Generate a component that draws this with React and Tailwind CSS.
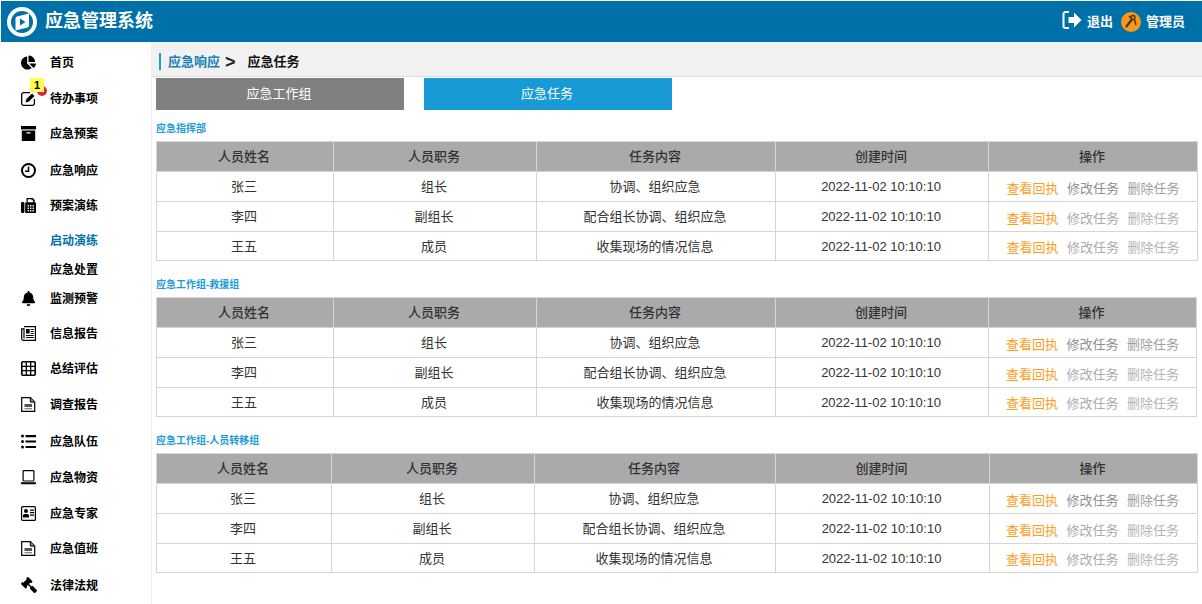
import React from "react";
import { FaChartPie, FaBell, FaGavel } from "react-icons/fa";

const Svg = ({ children }) => (
  <svg width="15" height="15" viewBox="0 0 15 15" className="block overflow-visible">
    {children}
  </svg>
);

const EditIcon = () => (
  <Svg>
    <path d="M9 1.6H2.5A1.8 1.8 0 0 0 .7 3.4v9.1a1.8 1.8 0 0 0 1.8 1.8h9.1a1.8 1.8 0 0 0 1.8-1.8V8" fill="none" stroke="#000" strokeWidth="1.3" />
    <path d="M4.5 11.5l.8-3.2L11 2.5l2.5 2.5-5.8 5.7z" fill="#000" />
  </Svg>
);
const ArchiveIcon = () => (
  <Svg>
    <path d="M0 0h15v3.4H0z" />
    <path fillRule="evenodd" d="M.8 4.4h13.4V15H.8zM5.5 6.2v1.3h4V6.2z" />
  </Svg>
);
const ClockIcon = () => (
  <Svg>
    <circle cx="7.5" cy="7.5" r="6.5" fill="none" stroke="#000" strokeWidth="2" />
    <path d="M7.5 3.5V8.3H4" fill="none" stroke="#000" strokeWidth="1.5" />
  </Svg>
);
const FaxIcon = () => (
  <Svg>
    <rect x="0" y="4" width="3.4" height="11" rx="1.2" />
    <path fillRule="evenodd" d="M4.2 4.5h1.3V0h6.3l1.9 2v2.5h1.3V15H4.2zM6.5 7v1.4h1.4V7zM9 7v1.4h1.4V7zM11.5 7v1.4h1.4V7zM6.5 9.5v1.4h1.4V9.5zM9 9.5v1.4h1.4V9.5zM11.5 9.5v1.4h1.4V9.5zM6.5 12v1.4h1.4V12zM9 12v1.4h1.4V12zM11.5 12v1.4h1.4V12zM6.7 1.2v3h5.4v-2h-1.5v-1z" />
  </Svg>
);
const NewsIcon = () => (
  <Svg>
    <path d="M3 .7h11.4v13.6H2.2a1.5 1.5 0 0 1-1.5-1.5V2.8H3V12.5" fill="none" stroke="#000" strokeWidth="1.2" />
    <path d="M5 3h3.7v4.5H5zM9.7 3h3v1.1h-3zM9.7 5h3v1.1h-3zM9.7 7h3v1.1h-3zM5 9h7.7v1.1H5zM5 11h7.7v1.1H5z" />
  </Svg>
);
const TableIcon = () => (
  <Svg>
    <rect x=".8" y=".8" width="13.4" height="13.4" rx="1" fill="none" stroke="#000" strokeWidth="1.6" />
    <path d="M5.3 1v13M9.7 1v13M1 5.3h13M1 9.7h13" stroke="#000" strokeWidth="1.3" />
  </Svg>
);
const FileIcon = () => (
  <Svg>
    <path d="M.7.7h8.6l4.4 4.4v9.2H.7z" fill="#fff" stroke="#000" strokeWidth="1.2" />
    <path d="M9.3.7v4.4h4.4" fill="#888" stroke="#000" strokeWidth="1" />
    <path d="M3.5 7h7.5v3H3.5z" fill="#555" />
    <path d="M3.5 11h7.5v1.3H3.5z" fill="#888" />
  </Svg>
);
const ListIcon = () => (
  <Svg>
    <circle cx="1.5" cy="2" r="1.5" />
    <circle cx="1.5" cy="7.5" r="1.5" />
    <circle cx="1.5" cy="13" r="1.5" />
    <path d="M4.5 1h10.5v2.2H4.5zM4.5 6.4h10.5v2.2H4.5zM4.5 11.9h10.5v2.2H4.5z" />
  </Svg>
);
const LaptopIcon = () => (
  <Svg>
    <rect x="2.1" y=".6" width="10.8" height="10.4" rx=".8" fill="none" stroke="#000" strokeWidth="1.2" />
    <path d="M0 12.3h15v1.1a.8.8 0 0 1-.8.8H.8a.8.8 0 0 1-.8-.8z" />
  </Svg>
);
const IdIcon = () => (
  <Svg>
    <rect x=".6" y=".6" width="13.8" height="13.8" rx="1" fill="none" stroke="#000" strokeWidth="1.2" />
    <circle cx="5" cy="5" r="2" />
    <path d="M2 11.5V9.6A1.6 1.6 0 0 1 3.6 8h2.8A1.6 1.6 0 0 1 8 9.6v1.9z" />
    <path d="M9 3.5h4v1.2H9zM9 6h4v1.2H9zM9 8.5h4v1.2H9z" />
  </Svg>
);
const PieIcon = () => <FaChartPie className="w-[15px] h-[15px]" />;
const BellIcon = () => <FaBell className="w-[15px] h-[15px]" />;
const GavelIcon = () => <FaGavel className="w-[16px] h-[16px] -scale-x-100" />;

const navItems = [
  { label: "首页", icon: PieIcon, height: "h-[40px]" },
  { label: "待办事项", icon: EditIcon, height: "h-[32px]", badge: true },
  { label: "应急预案", icon: ArchiveIcon, height: "h-[38px]" },
  { label: "应急响应", icon: ClockIcon, height: "h-[36px]" },
  { label: "预案演练", icon: FaxIcon, height: "h-[34px]" },
  { label: "启动演练", active: true, height: "h-[36px]" },
  { label: "应急处置", height: "h-[22px]" },
  { label: "监测预警", icon: BellIcon, height: "h-[36px]" },
  { label: "信息报告", icon: NewsIcon, height: "h-[34px]" },
  { label: "总结评估", icon: TableIcon, height: "h-[36px]" },
  { label: "调查报告", icon: FileIcon, height: "h-[36px]" },
  { label: "应急队伍", icon: ListIcon, height: "h-[38px]" },
  { label: "应急物资", icon: LaptopIcon, height: "h-[34px]" },
  { label: "应急专家", icon: IdIcon, height: "h-[38px]" },
  { label: "应急值班", icon: FileIcon, height: "h-[32px]" },
  { label: "法律法规", icon: GavelIcon, height: "h-[42px]" },
];

const people = [
  { name: "张三", job: "组长", task: "协调、组织应急" },
  { name: "李四", job: "副组长", task: "配合组长协调、组织应急" },
  { name: "王五", job: "成员", task: "收集现场的情况信息" },
];

const groups = [
  { title: "应急指挥部", cols: [177, 203, 239, 213], width: "w-[1042px]", mb: "mb-[5px]", opsPad: "" },
  { title: "应急工作组-救援组", cols: [177, 203, 239, 213], width: "w-[1041px]", mb: "mb-[5px]", opsPad: "" },
  { title: "应急工作组-人员转移组", cols: [175, 203, 241, 214], width: "w-[1042px]", mb: "", opsPad: "pr-[2px]" },
];

const Logo = () => (
  <svg width="30" height="30" viewBox="0 0 30 30">
    <circle cx="15" cy="15" r="13" fill="none" stroke="#fff" strokeWidth="4" />
    <path d="M8.5 11.5Q8.5 10 10 9.5L22 6.5V18.5Q22 20 20.5 20.5L8.5 23.5Z" fill="#fff" />
    <path d="M13 11.5L18.5 15L13 18.5Z" fill="#0070a8" />
  </svg>
);

const LogoutIcon = () => (
  <svg width="20" height="20" viewBox="0 0 20 20" className="mr-[5px] -mt-[3px]">
    <path d="M7 2H3.5A2 2 0 0 0 1.5 4v12a2 2 0 0 0 2 2H7" fill="none" stroke="#fff" strokeWidth="2" />
    <path d="M6.5 7H12V2.5L19.5 10 12 17.5V13H6.5z" fill="#fff" />
  </svg>
);

const AdminIcon = () => (
  <svg width="20" height="20" viewBox="0 0 20 20" className="ml-[8px] mr-[5px]">
    <circle cx="10" cy="10" r="10" fill="#f7981d" />
    <circle cx="12" cy="5.5" r="2" fill="none" stroke="#4a3312" strokeWidth="1.3" />
    <path d="M10.8 7.5L5 15" stroke="#4a3312" strokeWidth="2.2" />
    <path d="M13.3 7L15 13" stroke="#4a3312" strokeWidth="1.4" />
    <path d="M10 6L8 4" stroke="#4a3312" strokeWidth="1.4" />
  </svg>
);

const GroupTable = ({ group }) => (
  <div className={group.mb}>
    <div className="h-[31px] pt-[12px] text-[10px] leading-[14px] font-bold text-[#1b9bd7]">
      {group.title}
    </div>
    <table className={`${group.width} table-fixed border-collapse border border-[#d5d5d5] text-[13px]`}>
      <colgroup>
        {group.cols.map((w, i) => (
          <col key={i} style={{ width: w }} />
        ))}
        <col />
      </colgroup>
      <thead>
        <tr className="h-[30px] bg-[#aaaaaa] text-[#333]">
          {["人员姓名", "人员职务", "任务内容", "创建时间", "操作"].map((h) => (
            <th key={h} className="border border-[#d5d5d5] font-medium pr-[2px]">
              {h}
            </th>
          ))}
        </tr>
      </thead>
      <tbody>
        {people.map((p, i) => (
          <tr key={p.name} className={`text-[#333] text-center ${i === 2 ? "h-[29px]" : "h-[30px]"}`}>
            {[p.name, p.job, p.task, "2022-11-02 10:10:10"].map((text) => (
              <td key={text} className={`border border-[#d5d5d5] pr-[2px] ${i === 2 ? "pt-[2px]" : ""}`}>
                {text}
              </td>
            ))}
            <td className={`border border-[#d5d5d5] ${group.opsPad}`}>
              <div className="flex justify-center gap-[8.5px] pt-[4px]">
                <span className="text-[#ff9d1e]">查看回执</span>
                <span className={i === 0 ? "text-[#8f8f8f]" : "text-[#ababab]"}>修改任务</span>
                <span className={i === 0 ? "text-[#a0a0a0]" : "text-[#b5b5b5]"}>删除任务</span>
              </div>
            </td>
          </tr>
        ))}
      </tbody>
    </table>
  </div>
);

export default function App() {
  return (
    <div
      className="h-[604px] w-[1202px] overflow-hidden bg-white pt-px pl-px flex flex-col"
      style={{ fontFamily: '"Liberation Sans", "Noto Sans CJK SC", sans-serif' }}
    >
      {/* top bar */}
      <header className="h-[41px] shrink-0 bg-[#0070a8] flex items-center pl-[6px] pr-[17px] text-white">
        <Logo />
        <span className="ml-[8px] text-[18px] font-bold">应急管理系统</span>
        <div className="ml-auto flex items-center text-[13px] font-bold">
          <LogoutIcon />
          <span>退出</span>
          <AdminIcon />
          <span>管理员</span>
        </div>
      </header>

      <div className="flex flex-1 min-h-0">
        {/* sidebar */}
        <aside className="w-[151px] shrink-0 border-r border-[#eee] pt-[1px] text-[12px] font-bold text-black">
          {navItems.map((item) => {
            const Icon = item.icon;
            return (
              <div key={item.label} className={`${item.height} flex items-center pl-[20px] relative`}>
                <span className="w-[29px] flex justify-start -mt-[2px]">{Icon && <Icon />}</span>
                <span className={item.active ? "text-[#0070a8]" : ""}>{item.label}</span>
                {item.badge && (
                  <>
                    <span className="absolute left-[36px] top-[3px] w-[10px] h-[10px] rounded-full bg-[#d9263c]" />
                    <span className="absolute left-[29px] top-[-5px] w-[14px] h-[14px] bg-[#ffff4d] text-[11px] leading-[14px] text-center">
                      1
                    </span>
                  </>
                )}
              </div>
            );
          })}
        </aside>

        {/* main */}
        <main className="flex-1 min-w-0">
          <div className="h-[35px] bg-[#f1f1f1] border-b border-[#ddd] flex items-center pl-[7px] pt-[5px] text-[13px] font-bold">
            <span className="w-[2px] h-[17px] bg-[#1b9bd7] mr-[7px]" />
            <span className="text-[#1a7fb8]">应急响应</span>
            <span className="ml-[5px] text-[18px] leading-[18px] text-[#222]">&gt;</span>
            <span className="ml-[12px] text-[#111]">应急任务</span>
          </div>
          <div className="pl-[4px] pt-[1px]">
            <div className="flex gap-[20px] text-[13px] text-white">
              <div className="w-[248px] h-[32px] bg-[#808080] flex items-center justify-center pr-[2px]">应急工作组</div>
              <div className="w-[248px] h-[32px] bg-[#179ad6] flex items-center justify-center pr-[2px]">应急任务</div>
            </div>
            {groups.map((g) => (
              <GroupTable key={g.title} group={g} />
            ))}
          </div>
        </main>
      </div>
    </div>
  );
}
